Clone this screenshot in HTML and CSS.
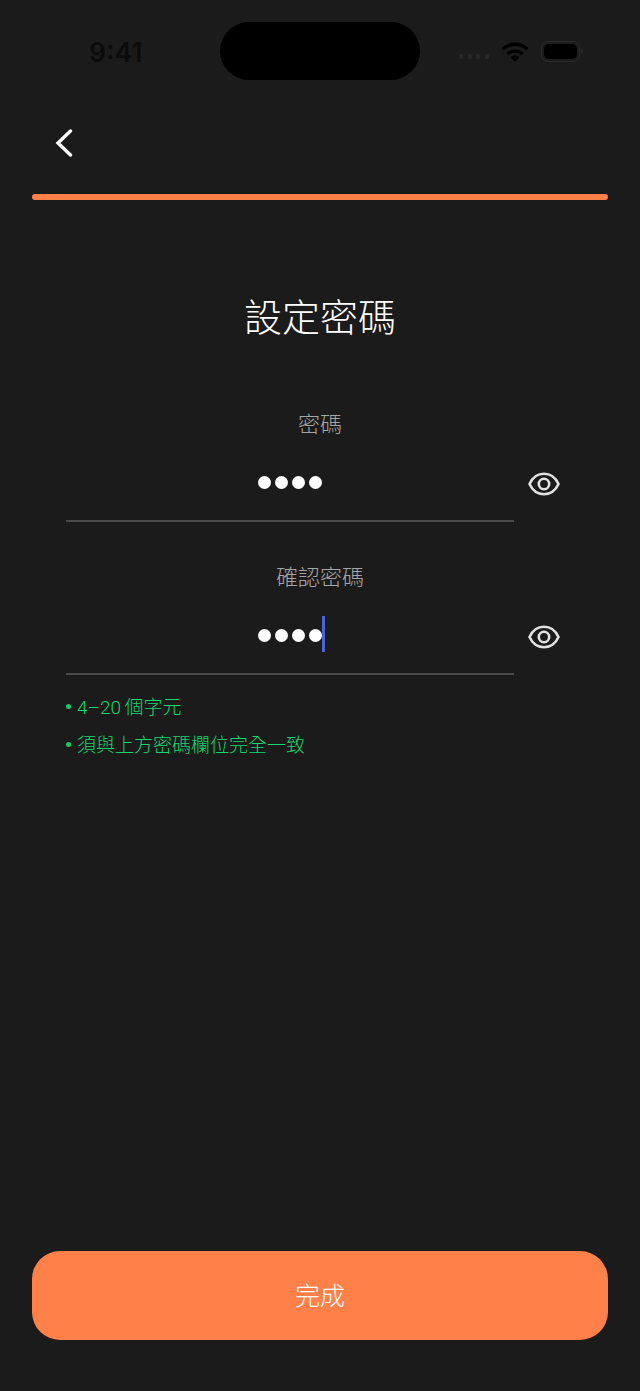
FILE: index.html
```html
<!doctype html>
<html lang="zh-Hant">
<head>
    <title>設定密碼</title>
    <meta charset="utf-8" name="viewport" content="width=device-width,initial-scale=1">
    <link rel="stylesheet" href="styles.css">
</head>
<body>
    <div class="page">
        <div class="status_bar">
            <div class="time">9:41</div>
            <div class="island"></div>
            <div class="status_icons">
                <div class="signal"><i></i><i></i><i></i><i></i></div>
                <svg class="wifi" width="28" height="22" viewBox="0 0 28 22">
                    <path d="M1.5 8.2C8.5 1.6 19.5 1.6 26.5 8.2" fill="none" stroke="#000" stroke-width="3.4"/>
                    <path d="M6.5 13C10.8 9.1 17.2 9.1 21.5 13" fill="none" stroke="#000" stroke-width="3.4"/>
                    <path d="M9.6 16.2L14 20.8L18.4 16.2C15.8 13.9 12.2 13.9 9.6 16.2Z" fill="#000"/>
                </svg>
                <div class="battery"><div class="battery_fill"></div></div>
                <div class="battery_nub"></div>
            </div>
        </div>
        <div class="nav">
            <svg class="back" width="18" height="28" viewBox="0 0 18 28">
                <path d="M15.5 2L3 14L15.5 26" fill="none" stroke="#fff" stroke-width="3.4" stroke-linecap="round" stroke-linejoin="miter"/>
            </svg>
        </div>
        <div class="progress"></div>
        <div class="title">設定密碼</div>
        <div class="form">
            <div class="field">
                <div class="label">密碼</div>
                <div class="field_row">
                    <div class="input">
                        <span class="dot"></span><span class="dot"></span><span class="dot"></span><span class="dot"></span>
                    </div>
                    <svg class="eye" width="32" height="24" viewBox="0 0 32 24">
                        <path d="M1.5 12C4.500 5.500 10 1.800 16 1.800S27.500 5.500 30.500 12C27.500 18.500 22 22.200 16 22.200S4.500 18.500 1.500 12Z" fill="none" stroke="#e2e2e2" stroke-width="2.600"/>
                        <circle cx="16" cy="12" r="5.200" fill="none" stroke="#e2e2e2" stroke-width="2.600"/>
                    </svg>
                </div>
            </div>
            <div class="field">
                <div class="label">確認密碼</div>
                <div class="field_row">
                    <div class="input">
                        <span class="dot"></span><span class="dot"></span><span class="dot"></span><span class="dot"></span><span class="caret"></span>
                    </div>
                    <svg class="eye" width="32" height="24" viewBox="0 0 32 24">
                        <path d="M1.5 12C4.500 5.500 10 1.800 16 1.800S27.500 5.500 30.500 12C27.500 18.500 22 22.200 16 22.200S4.500 18.500 1.500 12Z" fill="none" stroke="#e2e2e2" stroke-width="2.600"/>
                        <circle cx="16" cy="12" r="5.200" fill="none" stroke="#e2e2e2" stroke-width="2.600"/>
                    </svg>
                </div>
            </div>
            <div class="hints">
                <div class="hint">4–20 個字元</div>
                <div class="hint">須與上方密碼欄位完全一致</div>
            </div>
        </div>
        <div class="button">完成</div>
    </div>
</body>
</html>
```

FILE: styles.css
```css
*{
    box-sizing: border-box;
}
html, body{
    margin: 0;
    padding: 0;
}
body{
    background-color: #1b1b1b;
    font-family: "Inter", "Noto Sans CJK TC", sans-serif;
    user-select: none;
}
.page{
    display: flex;
    flex-direction: column;
    height: 1391px;
    overflow: hidden;
}
.status_bar{
    display: flex;
    align-items: center;
    height: 58px;
    margin-top: 22px;
    padding-left: 89px;
}
.time{
    width: 131px;
    margin-top: 1px;
    font-size: 26.5px;
    font-weight: 600;
    color: #0b0b0b;
}
.island{
    width: 200px;
    height: 58px;
    border-radius: 29px;
    background-color: #000000;
}
.status_icons{
    display: flex;
    align-items: center;
    margin-left: 39px;
    margin-top: 1px;
}
.signal{
    display: flex;
    gap: 4.5px;
    margin-top: 10px;
    margin-right: 12.5px;
}
.signal i{
    display: block;
    width: 4px;
    height: 5px;
    border-radius: 2px;
    background-color: #2a2a2a;
}
.wifi{
    flex: none;
}
.battery{
    flex: none;
    margin-left: 12px;
    padding: 2px;
    width: 39px;
    height: 21px;
    border: 1px solid #2c2c2c;
    border-radius: 7px;
}
.battery_fill{
    height: 100%;
    border-radius: 5px;
    background-color: #000000;
}
.battery_nub{
    width: 2px;
    height: 5px;
    margin-left: 1px;
    border-radius: 0 2px 2px 0;
    background-color: #2c2c2c;
}
.nav{
    display: flex;
    align-items: center;
    height: 106px;
    padding: 0 0 0 55px;
}
.back{
    display: block;
    margin-top: 20px;
}
.progress{
    flex: none;
    height: 6px;
    margin: 8px 32px 0 32px;
    border-radius: 3px;
    background-color: #ff8149;
}
.title{
    margin-top: 90px;
    height: 54px;
    line-height: 54px;
    text-align: center;
    font-size: 38px;
    font-weight: 300;
    color: #ffffff;
}
.form{
    margin-top: 64px;
    padding: 0 66px;
}
.field + .field{
    margin-top: 39px;
}
.label{
    height: 40px;
    line-height: 32px;
    text-align: center;
    font-size: 22px;
    font-weight: 300;
    color: #a6a6a6;
}
.field_row{
    display: flex;
    align-items: center;
}
.input{
    display: flex;
    flex: none;
    align-items: center;
    justify-content: center;
    gap: 4px;
    width: 448px;
    height: 74px;
    padding-bottom: 4px;
    border-bottom: 2px solid #4a4a4a;
}
.dot{
    width: 13px;
    height: 13px;
    border-radius: 50%;
    background-color: #ffffff;
}
.input .caret{
    width: 3px;
    height: 36px;
    margin-top: -2px;
    margin-left: -4px;
    margin-right: -3px;
    background-color: #4a63d8;
}
.eye{
    flex: none;
    margin: 0 0 3px 14px;
}
.hints{
    margin-top: 11px;
}
.hint{
    display: flex;
    align-items: center;
    height: 38px;
    font-family: "Roboto", "Noto Sans CJK TC", sans-serif;
    font-size: 19px;
    font-weight: 300;
    word-spacing: -1px;
    white-space: pre;
    color: #12d870;
}
.hint::before{
    content: "";
    width: 5px;
    height: 5px;
    margin: 3px 6px 0 0;
    border-radius: 50%;
    background-color: #0fce69;
}
.button{
    flex: none;
    height: 89px;
    margin: auto 32px 51px 32px;
    padding-top: 1px;
    line-height: 89px;
    text-align: center;
    border-radius: 28px;
    font-size: 25px;
    font-weight: 300;
    color: #ffffff;
    background-color: #ff8149;
}
```
